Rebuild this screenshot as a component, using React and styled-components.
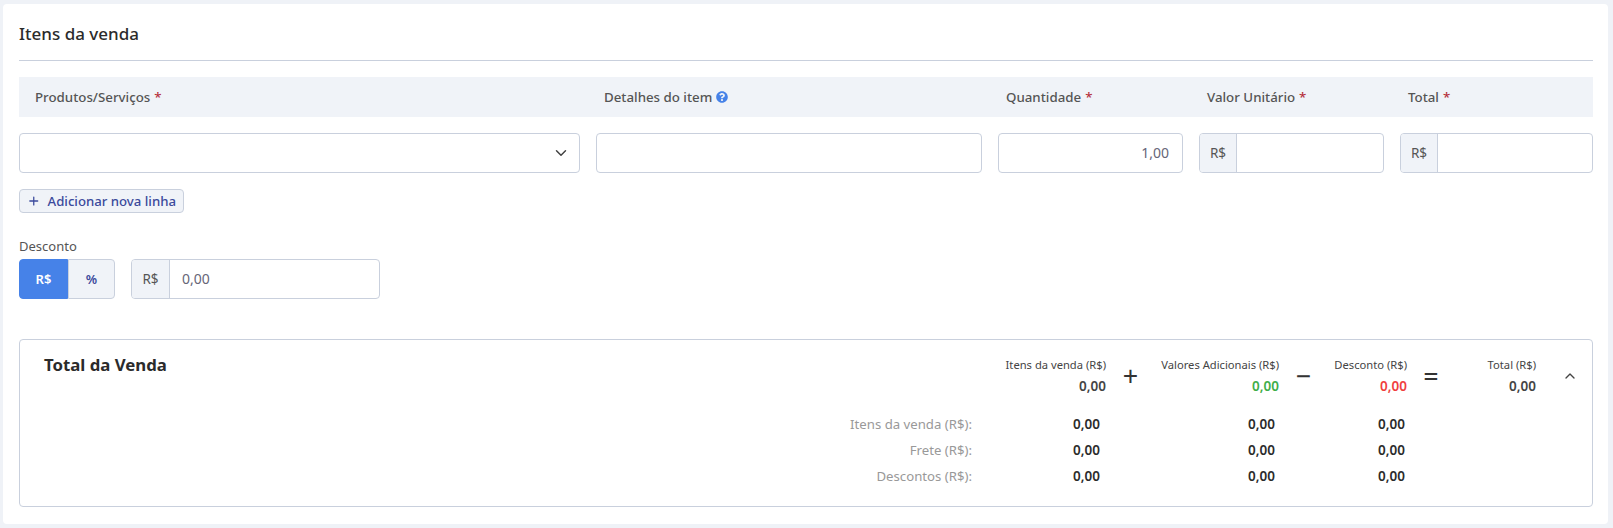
import { Fragment } from 'react';
import styled, { createGlobalStyle } from 'styled-components';
import { ChevronDown, ChevronUp, Plus } from 'lucide-react';
import { FaQuestionCircle } from 'react-icons/fa';

const GlobalStyle = createGlobalStyle`
  html, body { margin: 0; padding: 0; background: #eff2f7; }
  body { font-family: "Noto Sans", "Liberation Sans", sans-serif; color: #333; }
  * { box-sizing: border-box; }
`

const Page = styled.div`
  height: 528px;
  padding: 4px 5px 4px 3px;
  overflow: hidden;
`

const Card = styled.div`
  background: #fff;
  border-radius: 4px;
  height: 520px;
  padding: 0 15px 0 16px;
`

const CardTitle = styled.h2`
  margin: 0;
  height: 57px;
  padding-top: 18px;
  font-size: 17px;
  line-height: 24px;
  font-weight: 500;
  color: #2b2b2b;
  border-bottom: 1px solid #c9d0dd;
`

const columns = '561px 386px 185px 185px 1fr';

const HeaderBand = styled.div`
  display: grid;
  grid-template-columns: ${columns};
  column-gap: 16px;
  align-items: center;
  margin-top: 16px;
  height: 40px;
  background: #f0f3f8;
`

const HeaderCell = styled.div`
  padding-left: ${props => (props.$first ? '16px' : '8px')};
  font-size: 13.3px;
  font-weight: 500;
  color: #555;
  display: flex;
  align-items: center;
  gap: 4px;
`

const Star = styled.span`
  color: #b5303c;
`

const InputRow = styled.div`
  display: grid;
  grid-template-columns: ${columns};
  column-gap: 16px;
  margin-top: 16px;
`

const Field = styled.div`
  display: flex;
  align-items: center;
  justify-content: ${props => (props.$end ? 'flex-end' : 'flex-start')};
  height: 40px;
  padding: 0 ${props => props.$pad || '0'};
  border: 1px solid #c9d0dd;
  border-radius: 4px;
  background: #fff;
  font-size: 14px;
  color: #667;
  width: ${props => props.$width || 'auto'};
  overflow: hidden;
`

const Prefix = styled.span`
  display: flex;
  align-items: center;
  justify-content: center;
  width: ${props => props.$width || '37px'};
  height: 100%;
  flex: none;
  background: #f0f3f8;
  border-right: 1px solid #c9d0dd;
  font-size: 13.5px;
  color: #555;
`

const FieldValue = styled.span`
  padding-left: ${props => props.$indent || '0'};
  margin-bottom: 2px;
`

const AddButton = styled.button`
  display: flex;
  align-items: center;
  gap: 7px;
  margin-top: 16px;
  height: 24px;
  width: 165px;
  padding: 0 7px;
  border: 1px solid #c9d0dd;
  border-radius: 4px;
  background: #f0f3f8;
  color: #3b4a9c;
  font-family: inherit;
  font-size: 13.2px;
  font-weight: 500;
  white-space: nowrap;
`

const DiscountLabel = styled.div`
  margin: 23px 0 3px;
  font-size: 13px;
  line-height: 20px;
  color: #555;
`

const DiscountRow = styled.div`
  display: flex;
  gap: 16px;
`

const Toggle = styled.div`
  display: flex;
  height: 40px;
  width: 96px;
`

const ToggleItem = styled.div`
  display: flex;
  align-items: center;
  justify-content: center;
  flex: ${props => (props.$active ? '0 0 49px' : '1')};
  font-size: 13px;
  font-weight: 600;
  color: ${props => (props.$active ? '#fff' : '#3b4a9c')};
  background: ${props => (props.$active ? '#4682e8' : '#f0f3f8')};
  border: 1px solid ${props => (props.$active ? '#4682e8' : '#c9d0dd')};
  border-radius: ${props => (props.$active ? '4px 0 0 4px' : '0 4px 4px 0')};
`

const TotalBox = styled.div`
  margin-top: 40px;
  height: 168px;
  border: 1px solid #c9d0dd;
  border-radius: 4px;
  padding: 15px 14px 0 24px;
`

const SummaryRow = styled.div`
  display: flex;
  align-items: flex-start;
`

const TotalTitle = styled.h3`
  flex: 1;
  margin: 0;
  font-size: 16.8px;
  line-height: 20px;
  font-weight: 700;
  color: #2b2b2b;
`

const Stat = styled.div`
  width: ${props => props.$width}px;
  text-align: right;
`

const StatLabel = styled.div`
  font-size: 11.2px;
  line-height: 20px;
  color: #444;
  white-space: nowrap;
`

const StatValue = styled.div`
  margin-top: 1px;
  font-size: 13.5px;
  line-height: 20px;
  font-weight: 600;
  color: ${props => props.$color || '#444'};
`

const Sign = styled.div`
  width: ${props => props.$width}px;
  text-align: center;
  font-size: 27px;
  line-height: 32px;
  padding-top: 5px;
  color: #333;
`

const Toggler = styled.div`
  margin-left: 26px;
  padding-top: 12px;
  width: 16px;
  color: #444;
`

const DetailGrid = styled.div`
  display: grid;
  grid-template-columns: 1fr 128px 175px 130px;
  grid-auto-rows: 26px;
  align-items: center;
  margin: 15px 173px 0 0;
`

const DetailLabel = styled.div`
  text-align: right;
  font-size: 13.2px;
  color: #999;
`

const DetailValue = styled.div`
  text-align: right;
  font-size: 13.5px;
  font-weight: 600;
  color: #2b2b2b;
`

const detailRows = ['Itens da venda (R$):', 'Frete (R$):', 'Descontos (R$):'];

export default function App() {
  return (
    <Page>
      <GlobalStyle />
      <Card>
        <CardTitle>Itens da venda</CardTitle>

        <HeaderBand>
          <HeaderCell $first>Produtos/Serviços <Star>*</Star></HeaderCell>
          <HeaderCell>Detalhes do item <FaQuestionCircle size={12} color="#4682e8" /></HeaderCell>
          <HeaderCell>Quantidade <Star>*</Star></HeaderCell>
          <HeaderCell>Valor Unitário <Star>*</Star></HeaderCell>
          <HeaderCell>Total <Star>*</Star></HeaderCell>
        </HeaderBand>

        <InputRow>
          <Field $pad="9px" $end><ChevronDown size={18} color="#444" /></Field>
          <Field />
          <Field $pad="13px" $end><FieldValue>1,00</FieldValue></Field>
          <Field><Prefix>R$</Prefix></Field>
          <Field><Prefix>R$</Prefix></Field>
        </InputRow>

        <AddButton><Plus size={16} strokeWidth={2.25} />Adicionar nova linha</AddButton>

        <DiscountLabel>Desconto</DiscountLabel>
        <DiscountRow>
          <Toggle>
            <ToggleItem $active>R$</ToggleItem>
            <ToggleItem>%</ToggleItem>
          </Toggle>
          <Field $width="249px"><Prefix $width="38px">R$</Prefix><FieldValue $indent="12px">0,00</FieldValue></Field>
        </DiscountRow>

        <TotalBox>
          <SummaryRow>
            <TotalTitle>Total da Venda</TotalTitle>
            <Stat $width={120}>
              <StatLabel>Itens da venda (R$)</StatLabel>
              <StatValue>0,00</StatValue>
            </Stat>
            <Sign $width={49}>+</Sign>
            <Stat $width={124}>
              <StatLabel>Valores Adicionais (R$)</StatLabel>
              <StatValue $color="#3fae49">0,00</StatValue>
            </Stat>
            <Sign $width={49}>−</Sign>
            <Stat $width={79}>
              <StatLabel>Desconto (R$)</StatLabel>
              <StatValue $color="#f03e3e">0,00</StatValue>
            </Stat>
            <Sign $width={48}>=</Sign>
            <Stat $width={81}>
              <StatLabel>Total (R$)</StatLabel>
              <StatValue>0,00</StatValue>
            </Stat>
            <Toggler><ChevronUp size={16} /></Toggler>
          </SummaryRow>

          <DetailGrid>
            {detailRows.map(label => (
              <Fragment key={label}>
                <DetailLabel>{label}</DetailLabel>
                <DetailValue>0,00</DetailValue>
                <DetailValue>0,00</DetailValue>
                <DetailValue>0,00</DetailValue>
              </Fragment>
            ))}
          </DetailGrid>
        </TotalBox>
      </Card>
    </Page>
  )
}
